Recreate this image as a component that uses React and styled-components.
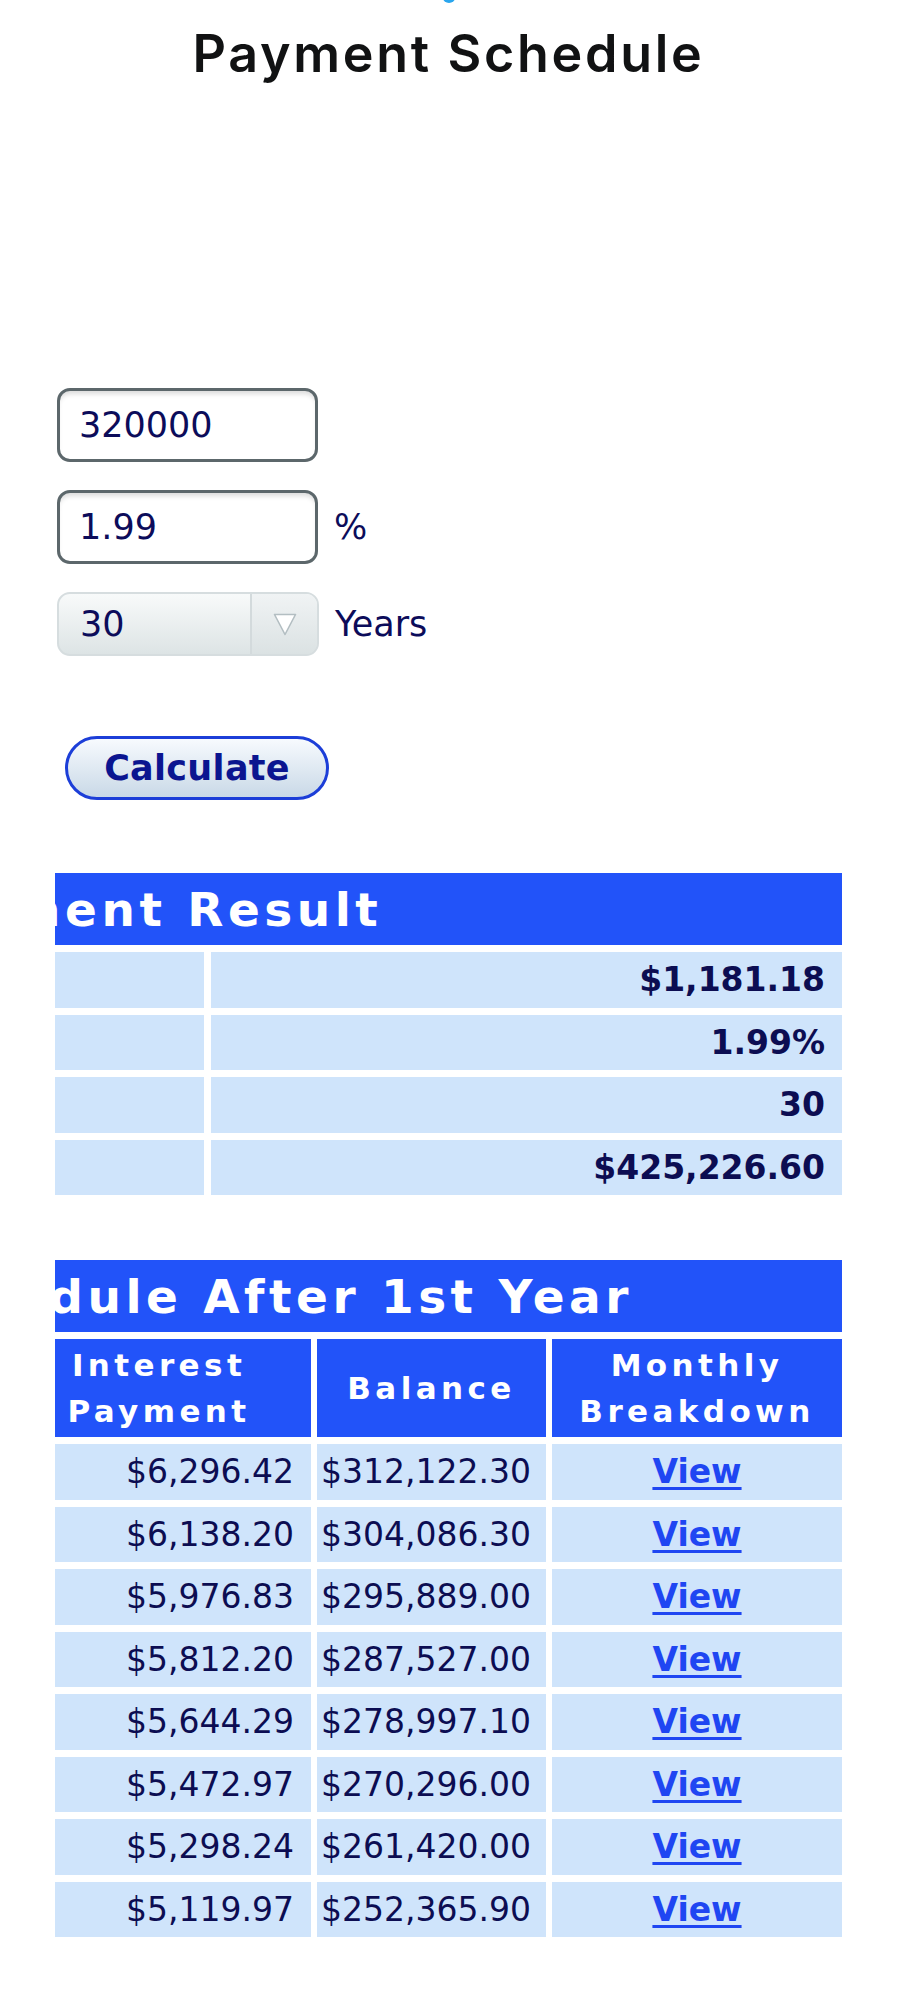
import React from "react";
import styled, { createGlobalStyle } from "styled-components";

const GlobalStyle = createGlobalStyle`
  html, body { margin: 0; padding: 0; background: #ffffff; }
  body { font-family: "DejaVu Sans", Verdana, sans-serif; }
  *, *::before, *::after { box-sizing: border-box; }
`;

const Page = styled.div`
  width: 901px;
  min-height: 1995px;
  padding: 0 59px 0 55px;
`;

const TopMark = styled.svg`
  display: block;
  margin: 0 auto;
`;

const Title = styled.h1`
  margin: 18px 0 0;
  font-family: Inter, "Noto Sans", sans-serif;
  font-weight: 600;
  font-size: 52px;
  letter-spacing: 2.7px;
  line-height: 64px;
  text-align: center;
  color: #111213;
`;

const AdSlot = styled.div`
  height: 302px;
`;

const Form = styled.form`
  display: flex;
  flex-direction: column;
  align-items: flex-start;
  gap: 28px;
  padding-left: 2px;
`;

const FieldRow = styled.div`
  display: flex;
  align-items: center;
  gap: 16px;
`;

const TextInput = styled.input`
  width: 261px;
  height: 74px;
  border: 3px solid #5c676b;
  border-radius: 13px;
  padding: 0 19px;
  font-family: "DejaVu Sans", Verdana, sans-serif;
  font-size: 35px;
  color: #0c0c5a;
  background: #ffffff;
  box-shadow: inset 0 5px 5px -2px rgba(0, 0, 0, 0.14);
  outline: none;
`;

const Unit = styled.span`
  font-size: 35px;
  color: #0c0c5a;
`;

const SelectBox = styled.div`
  display: flex;
  width: 262px;
  height: 64px;
  border: 2px solid #d6dddf;
  border-radius: 13px;
  overflow: hidden;
  background: linear-gradient(#f8fafa, #dde4e5);
`;

const SelectValue = styled.span`
  flex: 1;
  display: flex;
  align-items: center;
  padding-left: 21px;
  font-size: 35px;
  color: #0c0c5a;
`;

const SelectArrow = styled.span`
  width: 67px;
  display: flex;
  align-items: center;
  justify-content: center;
  border-left: 2px solid #d3dadc;
  background: linear-gradient(#f0f3f4, #dbe2e3);
`;

const CalcButton = styled.button`
  margin: 52px 0 0 8px;
  width: 264px;
  height: 64px;
  border: 3px solid #1c3ed8;
  border-radius: 32px;
  background: linear-gradient(#f7fafe, #c9d9e7);
  font-family: "DejaVu Sans", Verdana, sans-serif;
  font-weight: bold;
  font-size: 35px;
  letter-spacing: 0.3px;
  color: #0b1590;
  cursor: pointer;
`;

const Clip = styled.div`
  display: flex;
  justify-content: flex-end;
  overflow: hidden;
  margin-top: ${(p) => p.$top}px;
`;

const Grid = styled.div`
  flex: none;
  display: grid;
  grid-template-columns: ${(p) => p.$cols};
  column-gap: ${(p) => p.$colGap}px;
  row-gap: 7px;
`;

const TitleCell = styled.div`
  grid-column: 1 / -1;
  height: 72px;
  display: flex;
  align-items: center;
  padding-left: 15px;
  background: #2253f9;
  color: #ffffff;
  font-weight: bold;
  font-size: 47px;
  letter-spacing: 4.5px;
  white-space: nowrap;
`;

const HeadCell = styled.div`
  height: 98px;
  display: flex;
  align-items: center;
  justify-content: center;
  text-align: center;
  background: #2253f9;
  color: #ffffff;
  font-weight: bold;
  font-size: 31px;
  line-height: 46px;
  letter-spacing: 4.4px;
`;

const Cell = styled.div`
  height: 55.5px;
  display: flex;
  align-items: center;
  justify-content: ${(p) => (p.$center ? "center" : "flex-end")};
  padding: 0 ${(p) => p.$pad || 0}px;
  background: #cfe4fb;
  color: #0c0d52;
  font-weight: ${(p) => (p.$bold ? "bold" : "normal")};
  font-size: ${(p) => p.$size || 33}px;
  white-space: nowrap;
`;

const ViewLink = styled.a`
  color: #1f46f2;
  font-weight: bold;
  font-size: 33px;
  text-decoration: underline;
  text-decoration-thickness: 3px;
  text-underline-offset: 4px;
`;

const summary = ["$1,181.18", "1.99%", "30", "$425,226.60"];

const schedule = [
  ["$6,296.42", "$312,122.30"],
  ["$6,138.20", "$304,086.30"],
  ["$5,976.83", "$295,889.00"],
  ["$5,812.20", "$287,527.00"],
  ["$5,644.29", "$278,997.10"],
  ["$5,472.97", "$270,296.00"],
  ["$5,298.24", "$261,420.00"],
  ["$5,119.97", "$252,365.90"],
];

export default function App() {
  return (
    <Page>
      <GlobalStyle />
      <TopMark width="16" height="4" viewBox="0 0 16 4">
        <ellipse cx="8" cy="-2" rx="6" ry="5" fill="#2aa6ee" />
      </TopMark>
      <Title>Payment Schedule</Title>
      <AdSlot />
      <Form onSubmit={(e) => e.preventDefault()}>
        <FieldRow>
          <TextInput defaultValue="320000" />
        </FieldRow>
        <FieldRow>
          <TextInput defaultValue="1.99" />
          <Unit>%</Unit>
        </FieldRow>
        <FieldRow>
          <SelectBox>
            <SelectValue>30</SelectValue>
            <SelectArrow>
              <svg width="24" height="23" viewBox="0 0 24 23">
                <polygon
                  points="1.5,1.5 22.5,1.5 12,21.5"
                  fill="#ffffff"
                  stroke="#b3bec2"
                  strokeWidth="1.6"
                  strokeLinejoin="round"
                />
              </svg>
            </SelectArrow>
          </SelectBox>
          <Unit>Years</Unit>
        </FieldRow>
        <CalcButton type="submit">Calculate</CalcButton>
      </Form>

      <Clip $top={73}>
        <Grid $cols="315px 631px" $colGap={7}>
          <TitleCell>Payment Result</TitleCell>
          {summary.map((v) => (
            <React.Fragment key={v}>
              <Cell />
              <Cell $bold $size={33} $pad={17}>
                {v}
              </Cell>
            </React.Fragment>
          ))}
        </Grid>
      </Clip>

      <Clip $top={65}>
        <Grid $cols="395px 304px 229px 290px" $colGap={6}>
          <TitleCell>Payment Schedule After 1st Year</TitleCell>
          <HeadCell />
          <HeadCell>Interest Payment</HeadCell>
          <HeadCell>Balance</HeadCell>
          <HeadCell>Monthly Breakdown</HeadCell>
          {schedule.map(([interest, balance]) => (
            <React.Fragment key={balance}>
              <Cell />
              <Cell $pad={17}>{interest}</Cell>
              <Cell $pad={15}>{balance}</Cell>
              <Cell $center>
                <ViewLink href="#">View</ViewLink>
              </Cell>
            </React.Fragment>
          ))}
        </Grid>
      </Clip>
    </Page>
  );
}
